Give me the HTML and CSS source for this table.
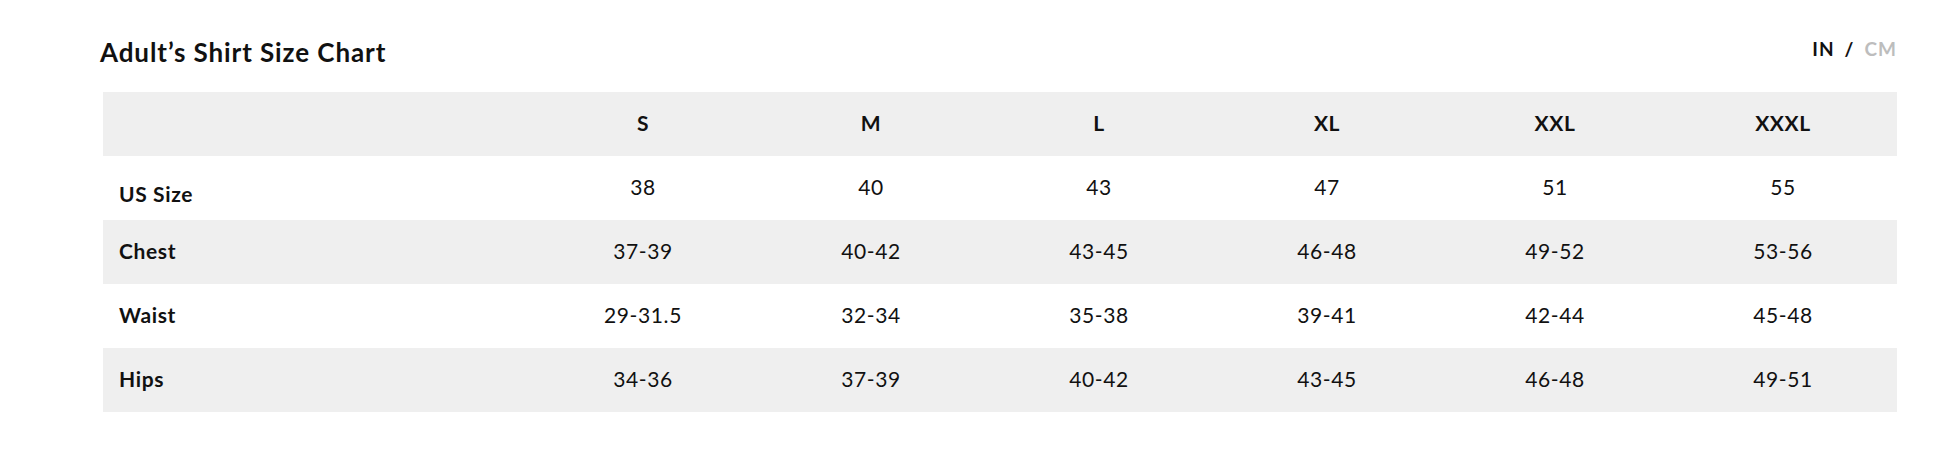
FILE: index.html
```html
<!DOCTYPE html>
<html>
<head>
<meta charset="utf-8">
<link rel="stylesheet" href="styles.css">
</head>
<body>
<div class="chart">
  <div class="chart-head">
    <h2 class="chart-title">Adult’s Shirt Size Chart</h2>
    <div class="units"><span class="unit active">IN</span><span class="sep">/</span><span class="unit">CM</span></div>
  </div>
  <table class="size-table">
    <thead>
      <tr class="shaded">
        <th class="label"></th><th>S</th><th>M</th><th>L</th><th>XL</th><th>XXL</th><th>XXXL</th>
      </tr>
    </thead>
    <tbody>
      <tr>
        <th class="label low">US Size</th><td>38</td><td>40</td><td>43</td><td>47</td><td>51</td><td>55</td>
      </tr>
      <tr class="shaded">
        <th class="label">Chest</th><td>37-39</td><td>40-42</td><td>43-45</td><td>46-48</td><td>49-52</td><td>53-56</td>
      </tr>
      <tr>
        <th class="label">Waist</th><td>29-31.5</td><td>32-34</td><td>35-38</td><td>39-41</td><td>42-44</td><td>45-48</td>
      </tr>
      <tr class="shaded">
        <th class="label">Hips</th><td>34-36</td><td>37-39</td><td>40-42</td><td>43-45</td><td>46-48</td><td>49-51</td>
      </tr>
    </tbody>
  </table>
</div>
</body>
</html>
```

FILE: styles.css
```css
html, body {
  margin: 0;
  padding: 0;
  background: #ffffff;
}
body {
  font-family: "Lato", "Liberation Sans", sans-serif;
  color: #111111;
}
.chart {
  padding: 0 49px 0 100px;
}
.chart-head {
  display: flex;
  justify-content: space-between;
  align-items: flex-start;
  height: 92px;
  box-sizing: border-box;
  padding-top: 37px;
}
.chart-title {
  margin: 0;
  font-size: 26px;
  line-height: 30px;
  font-weight: 700;
  letter-spacing: 0.035em;
}
.units {
  font-size: 19px;
  line-height: 22px;
  font-weight: 700;
  margin-top: 1px;
  display: flex;
  gap: 10px;
  letter-spacing: 1px;
}
.unit { color: #bdbdbd; }
.unit.active { color: #111111; }
.sep { color: #111111; }
.size-table {
  margin-left: 3px;
  width: 1794px;
  border-collapse: collapse;
  table-layout: fixed;
}
.size-table th,
.size-table td {
  height: 64px;
  padding: 0 0 4px 0;
  box-sizing: border-box;
  text-align: center;
  vertical-align: middle;
  font-size: 21px;
  letter-spacing: 0.03em;
}
.size-table th { font-weight: 700; }
.size-table td { font-weight: 400; }
.size-table th.label {
  width: 426px;
  text-align: left;
  padding-left: 16px;
}
.size-table th.low {
  padding-top: 14px;
}
.shaded { background: #efefef; }
```
